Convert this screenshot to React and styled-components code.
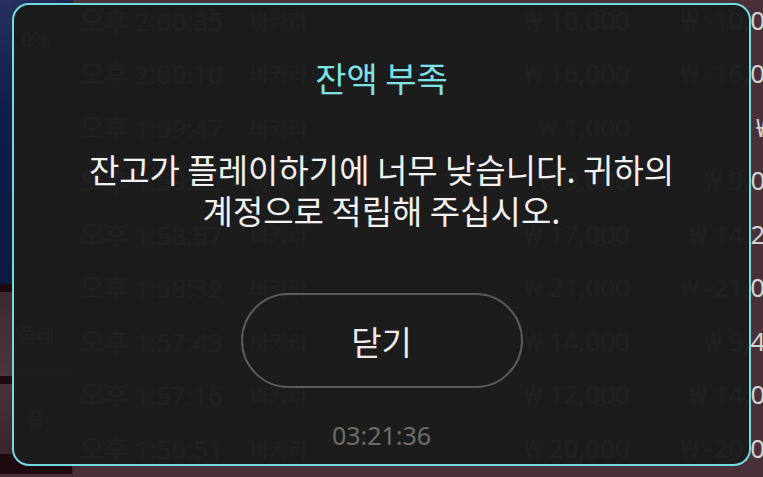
import React from "react";
import styled, { createGlobalStyle } from "styled-components";

const Global = createGlobalStyle`
  html, body { margin: 0; padding: 0; width: 763px; height: 477px; overflow: hidden; background: #4a3139; }
  body { font-family: "Noto Sans CJK KR", "Noto Sans", sans-serif; }
  #root { width: 763px; height: 477px; }
`;

const Page = styled.div`
  position: relative;
  width: 763px;
  height: 477px;
  overflow: hidden;
  display: flex;
  background: #4a3139;
`;

const Sidebar = styled.div`
  width: 72px;
  flex: none;
  display: flex;
  flex-direction: column;
  border-right: 1px solid #3a2a30;
`;

const SideCard = styled.div`
  height: ${(p) => p.$h}px;
  flex: none;
  display: flex;
  align-items: ${(p) => (p.$top ? "flex-start" : "center")};
  justify-content: center;
  padding-top: ${(p) => (p.$top ? 24 : 0)}px;
  box-sizing: border-box;
  color: #d8d8d8;
  font-size: 20px;
  background: ${(p) => p.$bg};
  border-bottom: ${(p) => p.$sep}px solid #1e0a0e;
`;

const Table = styled.div`
  flex: 1;
  display: flex;
  flex-direction: column;
  margin-top: -7px;
`;

const Row = styled.div`
  height: 53.5px;
  flex: none;
  display: grid;
  grid-template-columns: 170px 90px 290px 165px;
  align-items: center;
  padding-left: 7px;
  color: #d2d2d2;
  font-family: "Noto Sans", "Noto Sans CJK KR", sans-serif;
  font-size: 26px;
  white-space: nowrap;
`;

const Cell = styled.div`
  text-align: ${(p) => (p.$right ? "right" : "left")};
  font-size: ${(p) => (p.$small ? 21 : 26)}px;
`;

const Overlay = styled.div`
  position: absolute;
  left: 12px;
  top: 3px;
  width: 739px;
  height: 463px;
  box-sizing: border-box;
  border: 2px solid #71dbe0;
  border-radius: 17px;
  background: rgba(28, 28, 28, 0.984);
  display: flex;
  flex-direction: column;
  align-items: center;
  padding-top: 53px;
`;

const Title = styled.h2`
  margin: 0;
  font-size: 34px;
  font-weight: 400;
  line-height: 40px;
  color: #7fe2e9;
`;

const Message = styled.p`
  margin: 51px 0 0;
  font-size: 33px;
  font-weight: 400;
  line-height: 41px;
  color: #f2f2f2;
  text-align: center;
`;

const CloseButton = styled.button`
  margin-top: 62px;
  width: 282px;
  height: 95px;
  border-radius: 48px;
  border: 2px solid #5b5b5b;
  background: transparent;
  color: #ececec;
  font-family: "Noto Sans CJK KR", "Noto Sans", sans-serif;
  font-size: 33px;
  cursor: pointer;
`;

const Timer = styled.div`
  margin-top: 32px;
  font-family: "Noto Sans", sans-serif;
  font-size: 25px;
  line-height: 30px;
  color: #6c6c6c;
`;

const rows = [
  ["오후 2:00:35", "₩ 10,000", "₩ -10,000"],
  ["오후 2:00:10", "₩ 16,000", "₩ -16,000"],
  ["오후 1:59:47", "₩ 1,000", "₩ 0"],
  ["오후 1:59:22", "₩ 9,000", "₩ 9,000"],
  ["오후 1:58:57", "₩ 17,000", "₩ 14,200"],
  ["오후 1:58:32", "₩ 21,000", "₩ -21,000"],
  ["오후 1:57:43", "₩ 14,000", "₩ 9,400"],
  ["오후 1:57:16", "₩ 12,000", "₩ 14,000"],
  ["오후 1:56:51", "₩ 20,000", "₩ -20,000"],
];

export default function App() {
  return (
    <>
      <Global />
      <Page>
        <Sidebar>
          <SideCard $h={292} $top $sep={8} $bg="radial-gradient(circle at 10% 0%, #27305f 0%, #0e1c4a 40%, #0c1a44 100%)">
            0%
          </SideCard>
          <SideCard $h={92} $sep={8} $bg="linear-gradient(180deg, #3c2a30, #4d353c)">플레</SideCard>
          <SideCard $h={70} $sep={0} $bg="linear-gradient(180deg, #4a3238, #3a252b)">플</SideCard>
          <SideCard $h={20} $sep={0} $bg="#1e0a0e" />
        </Sidebar>
        <Table>
          {rows.map((r) => (
            <Row key={r[0]}>
              <Cell>{r[0]}</Cell>
              <Cell $small>바카라</Cell>
              <Cell $right>{r[1]}</Cell>
              <Cell $right>{r[2]}</Cell>
            </Row>
          ))}
        </Table>
        <Overlay role="dialog">
          <Title>잔액 부족</Title>
          <Message>
            잔고가 플레이하기에 너무 낮습니다. 귀하의
            <br />
            계정으로 적립해 주십시오.
          </Message>
          <CloseButton>닫기</CloseButton>
          <Timer>03:21:36</Timer>
        </Overlay>
      </Page>
    </>
  );
}
